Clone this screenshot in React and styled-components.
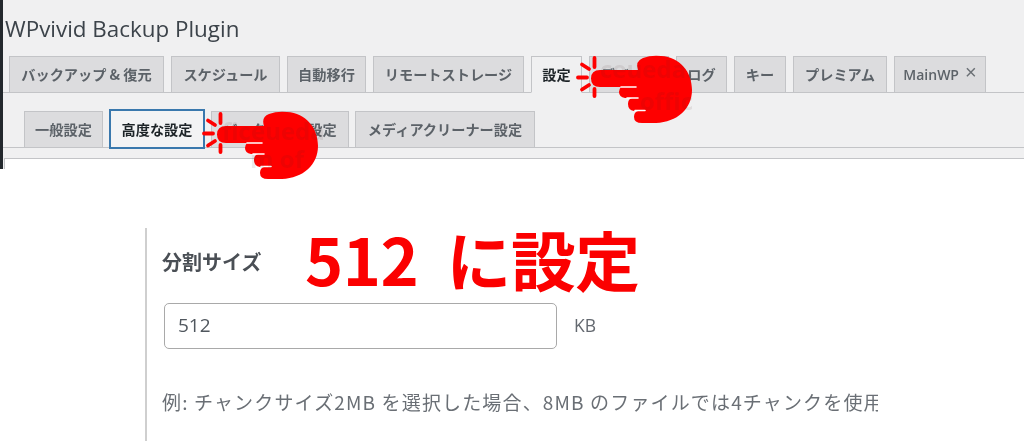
import React from "react";
import styled, { createGlobalStyle } from "styled-components";

const Global = createGlobalStyle`
  html, body { margin: 0; padding: 0; background: #fff; }
  body { width: 1024px; height: 441px; overflow: hidden; font-family: "Noto Sans CJK JP", "Noto Sans", sans-serif; }
`;

const Page = styled.div`
  position: relative;
  width: 1024px;
  height: 441px;
  overflow: hidden;
  background: #fff;
  filter: blur(0.45px);
`;

const AdminArea = styled.div`
  height: 169px;
  box-sizing: border-box;
  background: #f0f0f1;
  border-left: 3px solid #23282d;
  overflow: hidden;
`;

const Title = styled.h1`
  margin: 0;
  height: 56px;
  box-sizing: border-box;
  padding: 14px 0 0 2px;
  font: 400 22.4px/30px "Open Sans", sans-serif;
  color: #3c434a;
`;

const TabBar = styled.div`
  display: flex;
  align-items: flex-end;
  gap: ${(p) => p.$gap}px;
  height: ${(p) => p.$height}px;
  box-sizing: border-box;
  padding-left: ${(p) => p.$inset}px;
  border-bottom: 1px solid #c3c4c7;
`;

const Tab = styled.div`
  display: flex;
  flex: none;
  align-items: center;
  justify-content: center;
  gap: 6px;
  box-sizing: border-box;
  width: ${(p) => p.$w}px;
  height: 37px;
  margin-bottom: -1px;
  background: ${(p) => (p.$active ? "#f0f0f1" : "#dcdcde")};
  border: 1px solid #c3c4c7;
  border-bottom-color: ${(p) => (p.$active ? "#f0f0f1" : "#c3c4c7")};
  color: ${(p) => (p.$active ? "#1d2327" : "#5c6268")};
  font: 700 14.2px/1 "Noto Sans CJK JP", sans-serif;
  white-space: nowrap;
`;

const FocusTab = styled(Tab)`
  height: 40px;
  margin-bottom: -2px;
  background: #f3f3f4;
  border: 2px solid #3a78ad;
  color: #1d2327;
`;

const LatinLabel = styled.span`
  font: 600 14px/1 "Open Sans", sans-serif;
`;

const Close = styled.span`
  position: relative;
  top: -3px;
  font: 400 20px/1 "Liberation Sans", sans-serif;
  color: #6b7075;
`;

const Panel = styled.div`
  height: 20px;
  margin: 10px 0 0 1px;
  background: #fff;
  border-top: 1px solid #c3c4c7;
  border-left: 1px solid #c3c4c7;
`;

const Settings = styled.section`
  box-sizing: border-box;
  height: 213px;
  margin: 59px 0 0 145px;
  padding: 0 0 0 15px;
  border-left: 2px solid #cfcfcf;
`;

const HeadRow = styled.div`
  display: flex;
  align-items: center;
  height: 70px;
  gap: 41px;
`;

const FieldLabel = styled.label`
  flex: none;
  position: relative;
  top: -1px;
  font: 700 20px/1 "Noto Sans CJK JP", sans-serif;
  color: #4a4f55;
  width: 102px;
`;

const Callout = styled.div`
  position: relative;
  top: -5px;
  font: 700 64.8px/70px "Noto Sans CJK JP", sans-serif;
  color: #fb0000;
  white-space: pre;
  letter-spacing: -0.5px;
`;

const FieldRow = styled.div`
  display: flex;
  align-items: center;
  gap: 17px;
  margin: 5px 0 0 2px;
`;

const Input = styled.div`
  box-sizing: border-box;
  width: 393px;
  height: 46px;
  padding-left: 13px;
  border: 1.5px solid #a9a9a9;
  border-radius: 5px;
  font: 400 19px/43px "Open Sans", sans-serif;
  color: #50575e;
`;

const Unit = styled.span`
  font: 400 17.5px/1 "Open Sans", sans-serif;
  color: #646970;
`;

const Hint = styled.p`
  width: 716px;
  margin: 40px 0 0;
  overflow: hidden;
  font: 400 19px/26px "Noto Sans CJK JP", sans-serif;
  letter-spacing: 1.15px;
  color: #6a6f75;
  white-space: nowrap;
`;

const HandBox = styled.svg`
  position: absolute;
  left: ${(p) => p.$x}px;
  top: ${(p) => p.$y}px;
  width: 120px;
  height: 85px;
  overflow: visible;
`;

const Hand = ({ x, y, marks }) => (
  <HandBox $x={x} $y={y} viewBox="0 0 120 85" aria-hidden="true">
    <path
      fill="#fe0000"
      d="M26 26H64Q61 17 69 14Q77 11 87 12C106 13 118 28 118 46C118 65 103 78 82 79H68Q60 79 60 73Q60 68 64 67H60Q54 66 54 60Q54 55 58 54H51Q45 53 45 48Q45 45 47 43H26Q17 43 17 34.5Q17 26 26 26Z"
    />
    <g stroke="#fff" strokeWidth="1.6" strokeLinecap="round">
      <path d="M47 43H62M53 54H64M61 66.5H71" fill="none" />
    </g>
    <g stroke="#fe0000" strokeWidth="3.8" strokeLinecap="round" fill="none">
      <path d="M20.5 14V23M20.5 45V52M4 33.5H13M8 20.5L15 25M8 45.5L15 41" />
    </g>
    {marks.map((m) => (
      <text key={m.t} x={m.x} y={m.y} fontFamily="Open Sans, sans-serif" fontWeight="700" fontSize="24" fill="rgba(70,30,30,0.09)">
        {m.t}
      </text>
    ))}
  </HandBox>
);

const mainTabs = [
  ["バックアップ & 復元", 155],
  ["スケジュール", 109],
  ["自動移行", 79],
  ["リモートストレージ", 151],
  ["設定", 51, true],
  ["デバッグ", 80],
  ["ログ", 51],
  ["キー", 52],
  ["プレミアム", 94],
];

const subTabs = [
  ["一般設定", 79],
  ["高度な設定", 96, true],
  ["バックアップ設定", 138],
  ["メディアクリーナー設定", 180],
];

export default function App() {
  return (
    <Page>
      <Global />
      <AdminArea>
        <Title>WPvivid Backup Plugin</Title>
        <TabBar $gap={7} $height={37} $inset={6}>
          {mainTabs.map(([label, w, active]) => (
            <Tab key={label} $w={w} $active={active}>
              {label}
            </Tab>
          ))}
          <Tab $w={92}>
            <LatinLabel>MainWP</LatinLabel>
            <Close>×</Close>
          </Tab>
        </TabBar>
        <TabBar $gap={6} $height={55} $inset={21}>
          {subTabs.map(([label, w, active]) =>
            active ? (
              <FocusTab key={label} $w={w}>
                {label}
              </FocusTab>
            ) : (
              <Tab key={label} $w={w}>
                {label}
              </Tab>
            )
          )}
        </TabBar>
        <Panel />
      </AdminArea>
      <Settings>
        <HeadRow>
          <FieldLabel>分割サイズ</FieldLabel>
          <Callout>512  に設定</Callout>
        </HeadRow>
        <FieldRow>
          <Input>512</Input>
          <Unit>KB</Unit>
        </FieldRow>
        <Hint>例: チャンクサイズ2MB を選択した場合、8MB のファイルでは4チャンクを使用します。</Hint>
      </Settings>
      <Hand x={200} y={100} marks={[{ t: "ficeueda", x: 22, y: 40 }, { t: "m of", x: 50, y: 68 }]} />
      <Hand x={574} y={44} marks={[{ t: "ceueda.", x: 26, y: 34 }, { t: "offic", x: 66, y: 66 }]} />
    </Page>
  );
}
